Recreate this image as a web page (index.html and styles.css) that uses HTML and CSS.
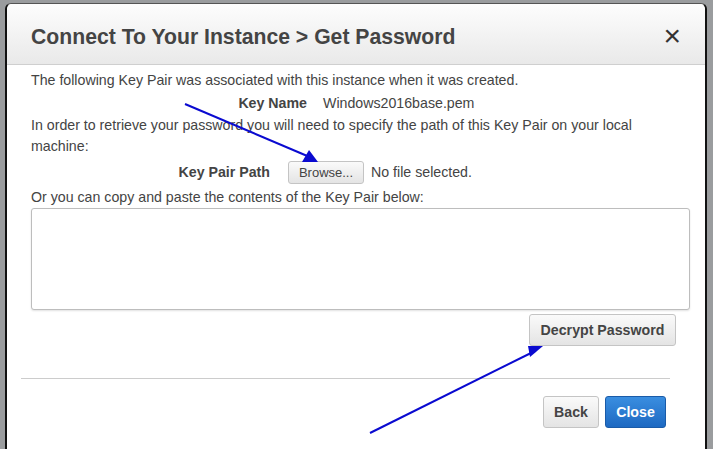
FILE: index.html
```html
<!DOCTYPE html>
<html lang="en">
<head>
    <meta charset="UTF-8">
    <title>Get Password</title>
    <link rel="stylesheet" href="styles.css">
</head>
<body>
    <div class="backdrop">
        <div class="dialog">
            <div class="dialog-header">
                <h2>Connect To Your Instance &gt; Get Password</h2>
                <span class="close-x">&times;</span>
            </div>
            <div class="dialog-body">
                <p class="line">The following Key Pair was associated with this instance when it was created.</p>
                <div class="field field-name">
                    <span class="label">Key Name</span>
                    <span class="value">Windows2016base.pem</span>
                </div>
                <p class="line">In order to retrieve your password you will need to specify the path of this Key Pair on your local machine:</p>
                <div class="field field-path">
                    <span class="label">Key Pair Path</span>
                    <button class="btn browse">Browse...</button>
                    <span class="value">No file selected.</span>
                </div>
                <p class="line">Or you can copy and paste the contents of the Key Pair below:</p>
                <textarea class="key-box"></textarea>
                <div class="decrypt-row">
                    <button class="btn decrypt">Decrypt Password</button>
                </div>
            </div>
            <div class="dialog-footer">
                <button class="btn back">Back</button>
                <button class="btn primary">Close</button>
            </div>
        </div>

        <!-- annotation arrows drawn over the dialog -->
        <svg class="arrows" width="713" height="449" viewBox="0 0 713 449">
            <line x1="185" y1="104" x2="312" y2="158" stroke="#0a0ad0" stroke-width="2"/>
            <path d="M318,162 L302,162 L309,150 z" fill="#0a0ad0"/>
            <line x1="370" y1="433" x2="535" y2="351" stroke="#0a0ad0" stroke-width="2"/>
            <path d="M543,346 L530,357 L528,346 z" fill="#0a0ad0"/>
        </svg>
    </div>
</body>
</html>
```
FILE: styles.css
```css
body {
    margin: 0;
    font-family: "Liberation Sans", Arial, sans-serif;
    color: #444;
}

.backdrop {
    position: relative;
    width: 713px;
    height: 449px;
    overflow: hidden;
    background-color: #9a9c9e;
    padding-top: 3px;
    box-sizing: border-box;
}

.dialog {
    margin-left: 5px;
    width: 702px;
    height: 460px;
    background-color: #fff;
    border-left: 2px solid #111;
    border-right: 2px solid #111;
    border-top: 1px solid #555;
    border-radius: 6px 6px 0 0;
    box-sizing: border-box;
}

.dialog-header {
    display: flex;
    align-items: center;
    justify-content: space-between;
    height: 60px;
    padding: 0 24px 0 24px;
    background: linear-gradient(#fdfdfd, #e9e9e9);
    border-bottom: 1px solid #cfcfcf;
    border-radius: 6px 6px 0 0;
}

.dialog-header h2 {
    margin: 0;
    padding-top: 5px;
    font-size: 21.2px;
    font-weight: bold;
    color: #444;
}

.close-x {
    font-size: 30px;
    font-weight: normal;
    color: #333;
    line-height: 1;
    padding-top: 4px;
}

.dialog-body {
    padding: 5px 16px 0 24px;
    font-size: 14.2px;
}

.line {
    margin: 0;
    max-width: 625px;
    line-height: 21px;
}

.field {
    display: flex;
    align-items: center;
    height: 24px;
}

.field .label {
    font-weight: bold;
    text-align: right;
    color: #444;
}

.field-name .label {
    width: 276px;
}

.field-name .value {
    margin-left: 16px;
}

.field-path {
    height: 30px;
}

.field-path .label {
    width: 239px;
}

.field-path .value {
    margin-left: 7px;
}

.btn {
    font-family: "Liberation Sans", Arial, sans-serif;
    font-size: 14.2px;
    color: #444;
    background: linear-gradient(#fafafa, #e4e4e4);
    border: 1px solid #c4c4c4;
    border-radius: 3px;
    cursor: pointer;
}

.browse {
    margin-left: 18px;
    height: 23px;
    width: 76px;
    padding: 0;
    font-size: 13px;
}

.key-box {
    display: block;
    width: 659px;
    height: 102px;
    border: 1px solid #bdbdbd;
    border-radius: 3px;
    box-shadow: 0 1px 2px rgba(0, 0, 0, 0.12);
    resize: none;
    box-sizing: border-box;
}

.decrypt-row {
    display: flex;
    justify-content: flex-end;
    padding-right: 13px;
    margin-top: 4px;
}

.decrypt {
    height: 32px;
    width: 147px;
    font-weight: bold;
}

.dialog-footer {
    display: flex;
    justify-content: flex-end;
    gap: 6px;
    margin: 32px 35px 0 14px;
    padding: 17px 4px 0 0;
    border-top: 1px solid #cccccc;
}

.back {
    height: 32px;
    width: 56px;
    font-weight: bold;
}

.primary {
    height: 32px;
    width: 61px;
    font-weight: bold;
    color: #fff;
    background: linear-gradient(#3a8ee0, #1d69c2);
    border-color: #1a5ba8;
}

.arrows {
    position: absolute;
    left: 0;
    top: 0;
    pointer-events: none;
}
```
